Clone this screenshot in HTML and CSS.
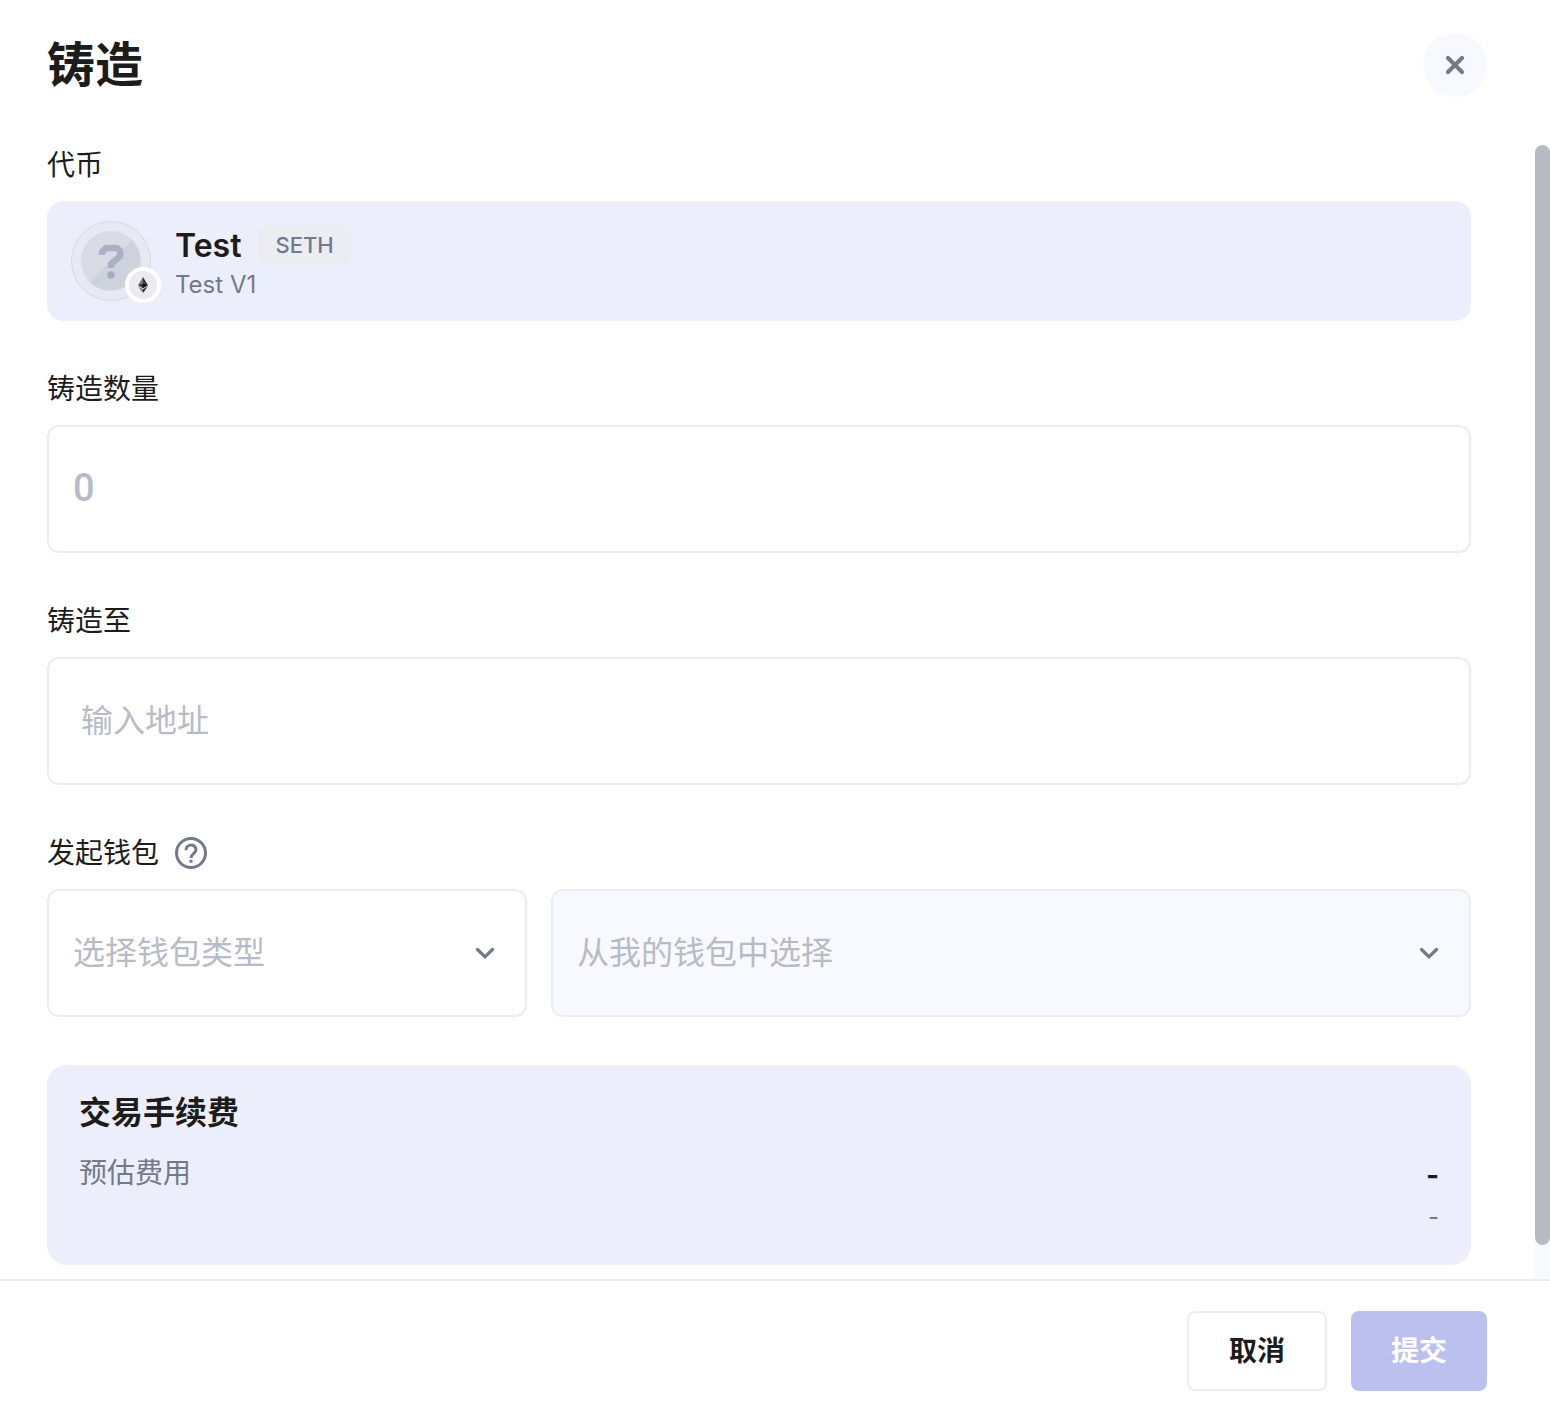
FILE: index.html
```html
<!DOCTYPE html>
<html lang="zh-CN">
<head>
  <meta charset="utf-8">
  <meta name="viewport" content="width=device-width, initial-scale=1">
  <link rel="stylesheet" href="styles.css">
  <title>铸造</title>
</head>
<body>
  <div class="modal" role="dialog" aria-labelledby="modalTitle">
    <header class="modal-header">
      <h1 id="modalTitle">铸造</h1>
      <button type="button" class="close" aria-label="关闭">
        <svg width="20" height="20" viewBox="0 0 20 20"><path d="M3 3l14 14M17 3L3 17" fill="none" stroke="#73798b" stroke-width="4.2" stroke-linecap="round"/></svg>
      </button>
    </header>

    <div class="modal-main">
      <form class="modal-body" id="mintForm">
        <div class="field">
          <div class="label">代币</div>
          <div class="token">
            <div class="token-icon">
              <svg width="80" height="80" viewBox="0 0 80 80">
                <circle cx="40" cy="40" r="39.5" fill="#e6eaf2" stroke="#d5d9e2"/>
                <circle cx="40" cy="40" r="30" fill="#d9dce5"/>
                <path d="M61.2 18.8A30 30 0 0 1 18.8 61.2z" fill="#ced2dc"/>
                <path d="M31 34V31L35 27H46L49 30V35L40 43V47" fill="none" stroke="#a9b1c2" stroke-width="6.4" stroke-linejoin="round"/>
                <circle cx="40" cy="54" r="3.8" fill="#a4acbf"/>
              </svg>
              <span class="chain">
                <svg width="10" height="16" viewBox="0 0 10 16">
                  <path d="M5 0L0 8.2 5 6z" fill="#777"/>
                  <path d="M5 0l5 8.2L5 6z" fill="#333"/>
                  <path d="M0 8.2L5 6v5.2z" fill="#333"/>
                  <path d="M10 8.2L5 6v5.2z" fill="#111"/>
                  <path d="M0 9.3l5 3V16z" fill="#777"/>
                  <path d="M10 9.3l-5 3V16z" fill="#333"/>
                </svg>
              </span>
            </div>
            <div class="token-info">
              <div class="token-name"><strong>Test</strong><span class="tag">SETH</span></div>
              <div class="token-desc">Test V1</div>
            </div>
          </div>
        </div>

        <div class="field">
          <label class="label" for="amount">铸造数量</label>
          <input class="control amount" id="amount" type="text" inputmode="decimal" placeholder="0">
        </div>

        <div class="field">
          <label class="label" for="address">铸造至</label>
          <input class="control address" id="address" type="text" placeholder="输入地址">
        </div>

        <div class="field">
          <div class="label">
            <label for="walletType">发起钱包</label>
            <svg class="help" width="32" height="32" viewBox="0 0 32 32" fill="none" stroke="#73798b">
              <circle cx="16" cy="16" r="14.5" stroke-width="3"/>
              <path d="M11 13.2C11 6.6 21 6.4 21 12.8C21 16.2 16 16.6 16 21" stroke-width="3"/>
              <circle cx="16" cy="24.3" r="1.7" fill="#73798b" stroke="none"/>
            </svg>
          </div>
          <div class="wallets">
            <div class="select">
              <select class="control" id="walletType">
                <option>选择钱包类型</option>
              </select>
              <svg class="arrow" width="20" height="12" viewBox="0 0 20 12"><path d="M2.5 2.5L10 9.8l7.5-7.3" fill="none" stroke="#73798b" stroke-width="3.2" stroke-linecap="round"/></svg>
            </div>
            <div class="select">
              <select class="control" id="wallet" aria-label="钱包" disabled>
                <option>从我的钱包中选择</option>
              </select>
              <svg class="arrow" width="20" height="12" viewBox="0 0 20 12"><path d="M2.5 2.5L10 9.8l7.5-7.3" fill="none" stroke="#73798b" stroke-width="3.2" stroke-linecap="round"/></svg>
            </div>
          </div>
        </div>

        <section class="fee">
          <h2>交易手续费</h2>
          <div class="fee-row">
            <span>预估费用</span>
            <div class="fee-value">
              <strong>-</strong>
              <span>-</span>
            </div>
          </div>
        </section>
      </form>
      <div class="scrollbar"><div class="scrollbar-thumb"></div></div>
    </div>

    <footer class="modal-footer">
      <button type="button" class="btn">取消</button>
      <button type="submit" class="btn btn-primary" form="mintForm" disabled>提交</button>
    </footer>
  </div>
</body>
</html>
```

FILE: styles.css
```css
* {
  box-sizing: border-box;
}

body {
  margin: 0;
  background: #fff;
  color: #1c1c1c;
  font-family: Inter, "Noto Sans CJK SC", sans-serif;
  font-size: 28px;
}

.modal {
  display: flex;
  flex-direction: column;
  height: 100vh;
}

.modal-header {
  display: flex;
  align-items: center;
  justify-content: space-between;
  padding: 33px 63px 48px 47px;
}

h1,
h2 {
  margin: 0;
  font-weight: 600;
}

h1 {
  font-size: 48px;
  line-height: 64px;
}

.close {
  display: flex;
  align-items: center;
  justify-content: center;
  width: 64px;
  height: 64px;
  padding: 0;
  border: none;
  border-radius: 50%;
  background: #f8f9fe;
  cursor: pointer;
}

.modal-main {
  display: flex;
  flex: 1;
  min-height: 0;
}

.modal-body {
  flex: 1;
  overflow-y: auto;
  padding: 0 64px 48px 47px;
  scrollbar-width: none;
}

.scrollbar {
  width: 15px;
  background: linear-gradient(#fff 50%, #f8f9fe 50%);
}

.scrollbar-thumb {
  height: 97%;
  border-radius: 8px;
  background: #b8bbc3;
}

.field {
  margin-bottom: 48px;
}

.label {
  display: flex;
  gap: 16px;
  height: 40px;
  margin-bottom: 16px;
  line-height: 40px;
}

.help {
  align-self: center;
}

.token {
  display: flex;
  align-items: center;
  gap: 24px;
  height: 120px;
  padding: 0 24px;
  border-radius: 16px;
  background: #eceefb;
}

.token-icon {
  position: relative;
  height: 80px;
}

.chain {
  position: absolute;
  right: -10px;
  bottom: -2px;
  display: flex;
  align-items: center;
  justify-content: center;
  width: 36px;
  height: 36px;
  border: 4px solid #fff;
  border-radius: 50%;
  background: #ebebf0;
}

.token-info {
  padding-top: 8px;
}

.token-name {
  display: flex;
  align-items: center;
  gap: 18px;
  height: 40px;
}

.token-name strong {
  font-size: 32px;
  font-weight: 600;
}

.tag {
  padding: 0 16px;
  border-radius: 8px;
  background: #ecedf2;
  color: #73798b;
  font-size: 22px;
  font-weight: 500;
  line-height: 40px;
}

.token-desc {
  color: #73798b;
  font-size: 24px;
  line-height: 40px;
}

.control {
  display: block;
  width: 100%;
  height: 128px;
  padding: 0 24px 2px;
  border: 2px solid #ecedf4;
  border-radius: 12px;
  background: #fff;
  color: #b8bbc5;
  font-family: inherit;
  font-size: 32px;
  appearance: none;
}

.control::placeholder {
  color: #b8bbc5;
}

.control:disabled {
  background: #f8f9fe;
  opacity: 1;
}

.amount {
  font-family: Roboto, sans-serif;
  font-size: 38px;
  font-weight: 500;
}

.address {
  padding: 0 32px 2px;
}

.wallets {
  display: grid;
  grid-template-columns: 480px 1fr;
  gap: 24px;
}

.select {
  position: relative;
}

.arrow {
  position: absolute;
  top: 58px;
  right: 32px;
  pointer-events: none;
}

.fee {
  height: 200px;
  padding: 24px 32px;
  border-radius: 20px;
  background: #eceefb;
}

.fee h2 {
  font-size: 32px;
  line-height: 48px;
}

.fee-row {
  display: flex;
  justify-content: space-between;
  margin-top: 16px;
  color: #73798b;
  line-height: 40px;
}

.fee-value {
  display: flex;
  flex-direction: column;
  align-items: flex-end;
  font-size: 24px;
}

.fee-value strong {
  color: #1c1c1c;
  font-size: 28px;
  font-weight: 700;
  line-height: 44px;
}

.modal-footer {
  display: flex;
  justify-content: flex-end;
  gap: 24px;
  padding: 30px 63px 19px;
  border-top: 2px solid #ecedf4;
}

.btn {
  height: 80px;
  padding: 0 40px 4px;
  border: 2px solid #ecedf4;
  border-radius: 8px;
  background: #fff;
  color: #1c1c1c;
  font-family: inherit;
  font-size: 28px;
  font-weight: 600;
  cursor: pointer;
}

.btn-primary {
  border: none;
  background: #bcc0ef;
  color: #fff;
}
```
